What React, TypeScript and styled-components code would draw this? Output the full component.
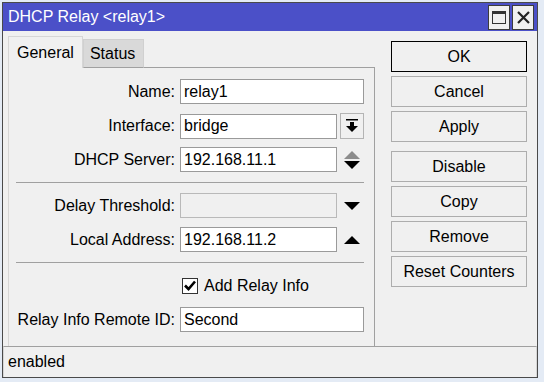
import styled, { createGlobalStyle } from "styled-components";

const GlobalStyle = createGlobalStyle`
  body {
    margin: 0;
    background: #e4ebf5;
    font-family: "Liberation Sans", Arial, sans-serif;
  }
`;

const Window = styled.div`
  margin: 2px 0 0 2px;
  width: 536px;
  height: 376px;
  box-sizing: border-box;
  border: 1px solid #4a4a4a;
  background: #f0f0f0;
  display: flex;
  flex-direction: column;
  font-size: 16px;
  color: #000;
`;

const TitleBar = styled.div`
  height: 28px;
  background: #4b50c8;
  color: #fff;
  display: flex;
  align-items: center;
  padding: 0 3px 0 5px;
  flex-shrink: 0;
`;

const Title = styled.div`
  flex: 1;
  font-size: 16px;
`;

const TitleButton = styled.div`
  width: 20px;
  height: 23px;
  margin-left: 2px;
  background: #f0f0f0;
  border: 1px solid #3c3c3c;
  display: flex;
  align-items: center;
  justify-content: center;
`;

const Content = styled.div`
  flex: 1;
  display: flex;
  padding: 6px 0 0 5px;
  min-height: 0;
`;

const LeftPane = styled.div`
  width: 367px;
  display: flex;
  flex-direction: column;
`;

const TabStrip = styled.div`
  height: 31px;
  display: flex;
  align-items: flex-end;
  position: relative;
  z-index: 1;
  margin-bottom: -1px;
`;

const Tab = styled.div<{ $active?: boolean }>`
  box-sizing: border-box;
  height: ${(p) => (p.$active ? "32px" : "29px")};
  padding: 0 8px 0 ${(p) => (p.$active ? "8px" : "6px")};
  display: flex;
  align-items: center;
  background: ${(p) => (p.$active ? "#f0f0f0" : "#d9d9d9")};
  border: 1px solid ${(p) => (p.$active ? "#d6d6d6" : "#d0d0d0")};
  border-bottom: ${(p) => (p.$active ? "none" : "1px solid #a0a0a0")};
`;

const Panel = styled.div`
  flex: 1;
  border-top: 1px solid #a0a0a0;
  border-right: 1px solid #a0a0a0;
  border-left: 1px solid #d6d6d6;
  padding-top: 11px;
  display: flex;
  flex-direction: column;
  gap: 9px;
`;

const FieldRow = styled.div`
  display: grid;
  grid-template-columns: 171px 184px;
  align-items: center;
  height: 25px;
`;

const Label = styled.div`
  text-align: right;
  padding-right: 5px;
  white-space: nowrap;
`;

const Field = styled.div`
  display: flex;
  align-items: center;
  gap: 3px;
  height: 100%;
`;

const Input = styled.div<{ $disabled?: boolean }>`
  flex: 1;
  height: 25px;
  box-sizing: border-box;
  border: 1px solid ${(p) => (p.$disabled ? "#b9b9b9" : "#9a9a9a")};
  background: ${(p) => (p.$disabled ? "#f0f0f0" : "#fff")};
  padding-left: 3px;
  display: flex;
  align-items: center;
`;

const SideButton = styled.div`
  width: 24px;
  height: 26px;
  box-sizing: border-box;
  border: 1px solid #b4b4b4;
  display: flex;
  align-items: center;
  justify-content: center;
`;

const SideIcon = styled.div`
  width: 24px;
  display: flex;
  flex-direction: column;
  align-items: center;
  justify-content: center;
  gap: 2px;
`;

const Separator = styled.div`
  margin: 1px 0 1px 7px;
  width: 348px;
  height: 1px;
  background: #a0a0a0;
`;

const CheckRow = styled.div`
  height: 25px;
  display: flex;
  align-items: center;
  padding-left: 173px;
  gap: 6px;
`;

const CheckBox = styled.div`
  width: 16px;
  height: 16px;
  box-sizing: border-box;
  border: 1px solid #333;
  background: #fff;
  display: flex;
  align-items: center;
  justify-content: center;
`;

const ButtonColumn = styled.div`
  width: 136px;
  margin-left: 16px;
  padding-top: 4px;
  display: flex;
  flex-direction: column;
  gap: 4px;
`;

const Button = styled.div<{ $default?: boolean; $spaced?: boolean }>`
  height: 31px;
  box-sizing: border-box;
  border: 1px solid ${(p) => (p.$default ? "#000" : "#adadad")};
  background: #f0f0f0;
  display: flex;
  align-items: center;
  justify-content: center;
  margin-top: ${(p) => (p.$spaced ? "5px" : "0")};
`;

const StatusBar = styled.div`
  height: 31px;
  flex-shrink: 0;
  box-sizing: border-box;
  border-top: 1px solid #a0a0a0;
  border-left: 1px solid #d6d6d6;
  border-right: 1px solid #d6d6d6;
  padding-left: 4px;
  display: flex;
  align-items: center;
`;

const Down = ({ color = "#000" }: { color?: string }) => (
  <svg width="16" height="8" viewBox="0 0 16 8">
    <polygon points="0,0 16,0 8,8" fill={color} />
  </svg>
);

const Up = ({ color = "#000" }: { color?: string }) => (
  <svg width="16" height="8" viewBox="0 0 16 8">
    <polygon points="0,8 16,8 8,0" fill={color} />
  </svg>
);

const DropIcon = () => (
  <svg width="12" height="14" viewBox="0 0 12 14">
    <rect x="0" y="0" width="12" height="1.5" fill="#000" />
    <rect x="4" y="3" width="4" height="4" fill="#000" />
    <polygon points="0,7 12,7 6,13" fill="#000" />
  </svg>
);

const App = () => {
  return (
    <>
      <GlobalStyle />
      <Window>
        <TitleBar>
          <Title>DHCP Relay &lt;relay1&gt;</Title>
          <TitleButton>
            <svg width="14" height="13" viewBox="0 0 14 13">
              <rect x="0.5" y="0.5" width="13" height="12" fill="none" stroke="#333" />
              <rect x="0" y="0" width="14" height="3" fill="#333" />
            </svg>
          </TitleButton>
          <TitleButton>
            <svg width="13" height="13" viewBox="0 0 13 13">
              <path d="M1 1 L12 12 M12 1 L1 12" stroke="#222" strokeWidth="2.2" />
            </svg>
          </TitleButton>
        </TitleBar>
        <Content>
          <LeftPane>
            <TabStrip>
              <Tab $active>General</Tab>
              <Tab>Status</Tab>
            </TabStrip>
            <Panel>
              <FieldRow>
                <Label>Name:</Label>
                <Field>
                  <Input>relay1</Input>
                </Field>
              </FieldRow>
              <FieldRow>
                <Label>Interface:</Label>
                <Field>
                  <Input>bridge</Input>
                  <SideButton>
                    <DropIcon />
                  </SideButton>
                </Field>
              </FieldRow>
              <FieldRow>
                <Label>DHCP Server:</Label>
                <Field>
                  <Input>192.168.11.1</Input>
                  <SideIcon>
                    <Up color="#8c8c8c" />
                    <Down />
                  </SideIcon>
                </Field>
              </FieldRow>
              <Separator />
              <FieldRow>
                <Label>Delay Threshold:</Label>
                <Field>
                  <Input $disabled />
                  <SideIcon>
                    <Down />
                  </SideIcon>
                </Field>
              </FieldRow>
              <FieldRow>
                <Label>Local Address:</Label>
                <Field>
                  <Input>192.168.11.2</Input>
                  <SideIcon>
                    <Up />
                  </SideIcon>
                </Field>
              </FieldRow>
              <Separator />
              <CheckRow>
                <CheckBox>
                  <svg width="12" height="11" viewBox="0 0 12 11">
                    <path d="M1 5.5 L4.5 9 L11 1.5" fill="none" stroke="#000" strokeWidth="2.6" />
                  </svg>
                </CheckBox>
                Add Relay Info
              </CheckRow>
              <FieldRow>
                <Label>Relay Info Remote ID:</Label>
                <Field>
                  <Input>Second</Input>
                </Field>
              </FieldRow>
            </Panel>
          </LeftPane>
          <ButtonColumn>
            <Button $default>OK</Button>
            <Button>Cancel</Button>
            <Button>Apply</Button>
            <Button $spaced>Disable</Button>
            <Button>Copy</Button>
            <Button>Remove</Button>
            <Button>Reset Counters</Button>
          </ButtonColumn>
        </Content>
        <StatusBar>enabled</StatusBar>
      </Window>
    </>
  );
};

export default App;
